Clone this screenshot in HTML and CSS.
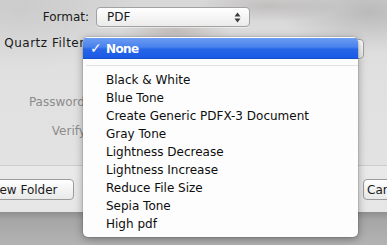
FILE: index.html
```html
<!DOCTYPE html>
<html lang="en">
<head>
    <meta charset="UTF-8">
    <title>Save as PDF</title>
    <link rel="stylesheet" href="styles.css">
</head>
<body>
    <div class="sheet">
        <div class="form">
            <label class="label">Format:</label>
            <div class="popup format-popup">
                <span>PDF</span>
                <svg class="arrows" width="7" height="11" viewBox="0 0 7 11">
                    <path d="M3.5 0.5 L6.5 4.5 L0.5 4.5 Z" fill="#3a3a3a"/>
                    <path d="M3.5 10.5 L6.5 6.5 L0.5 6.5 Z" fill="#3a3a3a"/>
                </svg>
            </div>

            <label class="label quartz">Quartz Filter:</label>
            <div class="popup filter-popup"></div>

            <label class="label muted pw-row">Password:</label>
            <div class="pw-row"></div>

            <label class="label muted verify-row">Verify:</label>
            <div class="verify-row"></div>
        </div>

        <div class="button-bar">
            <button class="btn new-folder">New Folder</button>
            <button class="btn cancel">Cancel</button>
        </div>
    </div>
    <div class="backdrop"></div>

    <!-- open popup menu for Quartz Filter -->
    <ul class="menu">
        <li class="item selected"><span class="check">&#10003;</span>None</li>
        <li class="sep"></li>
        <li class="item">Black &amp; White</li>
        <li class="item">Blue Tone</li>
        <li class="item">Create Generic PDFX-3 Document</li>
        <li class="item">Gray Tone</li>
        <li class="item">Lightness Decrease</li>
        <li class="item">Lightness Increase</li>
        <li class="item">Reduce File Size</li>
        <li class="item">Sepia Tone</li>
        <li class="item">High pdf</li>
    </ul>
</body>
</html>
```

FILE: styles.css
```css
body {
    margin: 0;
    width: 387px;
    height: 245px;
    overflow: hidden;
    position: relative;
    font-family: "DejaVu Sans", Verdana, sans-serif;
    font-size: 12px;
    color: #1a1a1a;
    background: #a9a9a9;
}

.sheet {
    height: 212px;
    display: flex;
    flex-direction: column;
    background:
        radial-gradient(ellipse 55px 14px at 175px 31px, rgba(110, 80, 80, 0.22), transparent),
        radial-gradient(ellipse 70px 16px at 270px 6px, rgba(90, 70, 70, 0.18), transparent),
        radial-gradient(ellipse 90px 40px at 370px 12px, rgba(0, 0, 0, 0.14), transparent),
        radial-gradient(ellipse 120px 60px at 20px 10px, rgba(0, 0, 0, 0.06), transparent),
        linear-gradient(#d7d7d7, #e0e0e0 70px, #e4e4e4);
}

.form {
    display: grid;
    grid-template-columns: 89px 268px;
    column-gap: 7px;
    padding-top: 7px;
}

.label {
    text-align: right;
    align-self: center;
    white-space: nowrap;
}
.label.quartz { letter-spacing: 0.5px; }
.muted { color: #8c8c8c; }

.popup {
    height: 18px;
    border: 1px solid #a2a2a2;
    border-radius: 4px;
    background: linear-gradient(#ffffff, #f3f3f3 60%, #ebebeb);
    box-shadow: 0 1px 0 rgba(255, 255, 255, 0.5);
    display: flex;
    align-items: center;
    padding: 0 8px 0 10px;
}
.format-popup {
    width: 134px;
    justify-content: space-between;
}
.filter-popup {
    margin-top: 12px;
}
.arrows { display: block; }

.pw-row { margin-top: 36px; height: 18px; }
.verify-row { margin-top: 11px; height: 18px; }

.button-bar {
    margin-top: auto;
    height: 47px;
    border-top: 1px solid #cdcdcd;
    background: linear-gradient(#e9e9e9, #e6e6e6);
    display: flex;
    justify-content: space-between;
    align-items: flex-start;
    padding-top: 13px;
    box-sizing: border-box;
    margin-left: -26px;
    margin-right: -60px;
}

.btn {
    font-family: inherit;
    font-size: 12px;
    color: #1a1a1a;
    height: 21px;
    padding: 0 14px;
    border: 1px solid #9c9c9c;
    border-radius: 4px;
    background: linear-gradient(#ffffff, #f1f1f1 60%, #e9e9e9);
}
.new-folder { width: 100px; text-align: center; }
.cancel { width: 84px; text-align: left; padding-left: 3px; }

.backdrop {
    height: 33px;
    background: linear-gradient(#8f8f8f, #a6a6a6 8px, #b3b3b3);
}

/* the open menu lies over the form */
.menu {
    position: absolute;
    left: 83px;
    top: 37px;
    width: 275px;
    height: 200px;
    margin: 0;
    padding: 1px 0 0;
    list-style: none;
    background: #fdfdfd;
    border-radius: 5px;
    box-shadow: 0 2px 8px rgba(0, 0, 0, 0.35), 0 0 0 1px rgba(0, 0, 0, 0.08);
    box-sizing: border-box;
    overflow: hidden;
}

.item {
    height: 18px;
    line-height: 18px;
    padding-left: 23px;
    color: #0d0d0d;
    white-space: nowrap;
}

.item.selected {
    height: 21px;
    line-height: 21px;
    padding-left: 7px;
    color: #fff;
    font-weight: bold;
    font-size: 12px;
    letter-spacing: -0.6px;
    background: linear-gradient(#6b9bf1, #4a82ee 45%, #2766e8 55%, #1a5be6);
    border-bottom: 1px solid #1650c9;
    box-sizing: border-box;
}
.check {
    display: inline-block;
    width: 16px;
    font-size: 14px;
    letter-spacing: 0;
}

.sep {
    height: 1px;
    margin: 6px 0 5px 3px;
    background: #e1e1e1;
}
```
